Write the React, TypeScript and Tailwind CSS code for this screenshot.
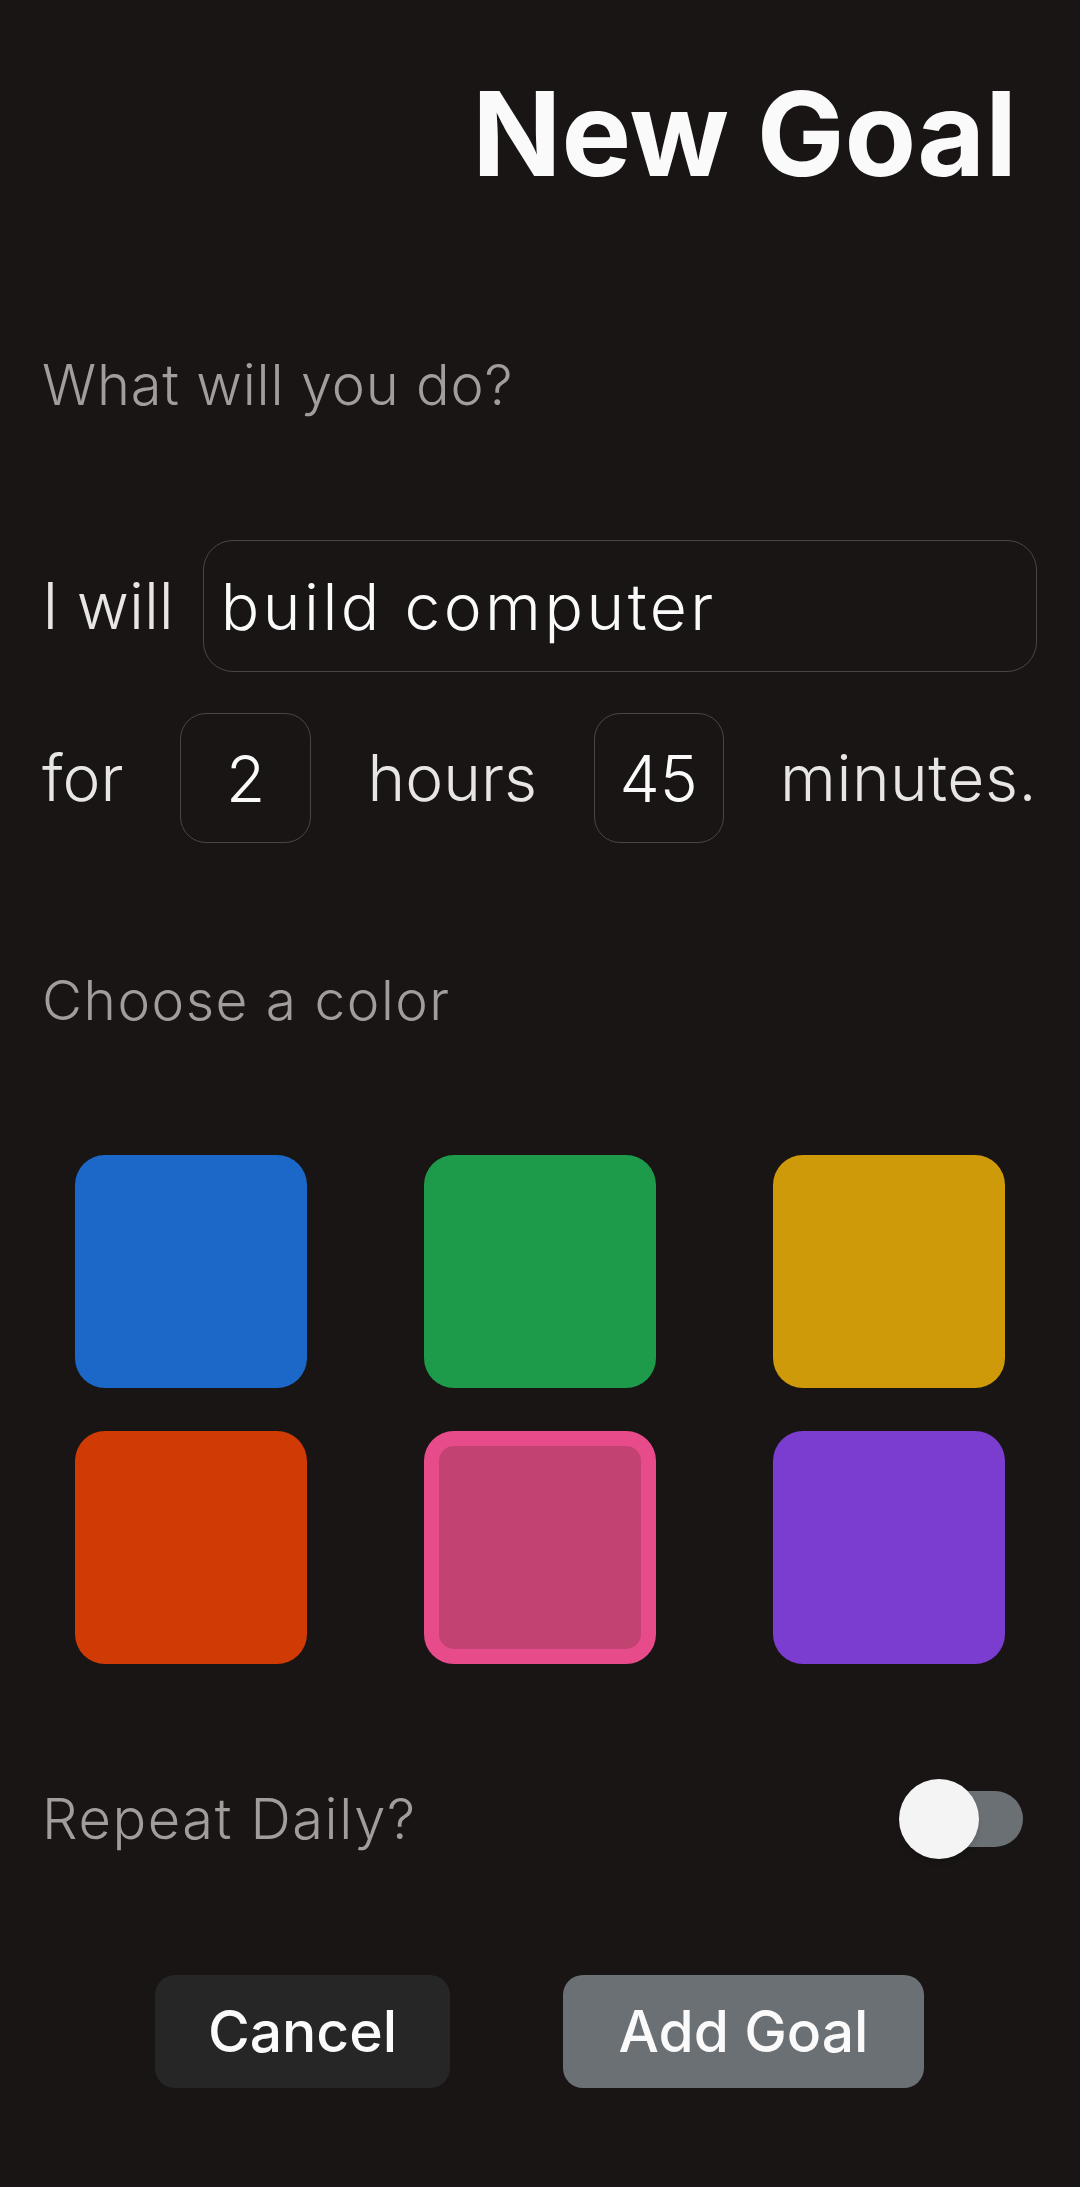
import { useState } from 'react'

const colors = [
  { id: 'blue', bg: 'bg-[#1b68c9]' },
  { id: 'green', bg: 'bg-[#1d9a4a]' },
  { id: 'yellow', bg: 'bg-[#cf9a0a]' },
  { id: 'orange', bg: 'bg-[#d03a04]' },
  { id: 'pink', bg: 'bg-[#c24272]' },
  { id: 'purple', bg: 'bg-[#7b3cd0]' },
]

const NewGoal = () => {
  const [what, setWhat] = useState('build computer')
  const [hours, setHours] = useState('2')
  const [minutes, setMinutes] = useState('45')
  const [picked, setPicked] = useState('pink')
  const [daily, setDaily] = useState(false)

  return (
    <div className="min-h-screen bg-[#181514] font-['Inter','Noto_Sans',sans-serif] text-[#e8e6e4] pl-[42px] pr-[43px] pt-[75px] pb-[99px]">
      <h1 className="text-right pr-[20px] text-[117px] leading-none font-bold tracking-[0px] text-[#fafafa]">New Goal</h1>

      <p className="mt-[165px] text-[56px] leading-none font-light tracking-[0.8px] text-[#a19d9b]">What will you do?</p>

      <div className="mt-[127px] flex items-center gap-[29px]">
        <span className="text-[64px] leading-none font-light whitespace-nowrap">I will</span>
        <input
          value={what}
          onChange={e => setWhat(e.target.value)}
          className="flex-1 min-w-0 h-[132px] rounded-[30px] border border-[#4a4645] bg-transparent px-[17px] text-[64px] font-light tracking-[3.5px] text-[#fafafa] outline-none"
        />
      </div>

      <div className="mt-[41px] flex items-center justify-between text-[64px] leading-none font-light">
        <span>for</span>
        <input
          value={hours}
          onChange={e => setHours(e.target.value)}
          className="w-[131px] h-[130px] rounded-[26px] border border-[#4a4645] bg-transparent text-center text-[64px] font-light text-[#fafafa] outline-none"
        />
        <span>hours</span>
        <input
          value={minutes}
          onChange={e => setMinutes(e.target.value)}
          className="w-[130px] h-[130px] rounded-[26px] border border-[#4a4645] bg-transparent text-center text-[64px] font-light text-[#fafafa] outline-none"
        />
        <span className="tracking-[0.5px]">minutes.</span>
      </div>

      <p className="mt-[130px] text-[55px] leading-none font-light tracking-[1.5px] text-[#a19d9b]">Choose a color</p>

      <div className="mt-[127px] grid grid-cols-[232px_232px_232px] justify-center gap-x-[117px] gap-y-[43px]">
        {colors.map(c => (
          <button
            key={c.id}
            onClick={() => setPicked(c.id)}
            className={
              picked === c.id
                ? `w-[232px] h-[233px] rounded-[30px] border-[15px] border-[#e84b8a] ${c.bg}`
                : `w-[232px] h-[233px] rounded-[30px] ${c.bg}`
            }
          />
        ))}
      </div>

      <div className="mt-[115px] flex items-center justify-between pr-[14px]">
        <span className="text-[56px] leading-none font-light tracking-[1.6px] text-[#a19d9b]">Repeat Daily?</span>
        <button onClick={() => setDaily(!daily)} className="relative w-[124px] h-[80px]">
          <span className={daily ? 'absolute left-[6px] right-0 top-[12px] h-[56px] rounded-full bg-[#c24272]' : 'absolute left-[6px] right-0 top-[12px] h-[56px] rounded-full bg-[#6b7075]'} />
          <span className={daily ? 'absolute right-0 top-0 w-[80px] h-[80px] rounded-full bg-[#f4f4f4] shadow-md' : 'absolute left-0 top-0 w-[80px] h-[80px] rounded-full bg-[#f4f4f4] shadow-md'} />
        </button>
      </div>

      <div className="mt-[116px] flex justify-center gap-[113px]">
        <button className="w-[295px] h-[113px] rounded-[20px] bg-[#262626] text-[57px] font-medium text-[#fafafa]">Cancel</button>
        <button className="w-[361px] h-[113px] rounded-[20px] bg-[#6b7075] text-[57px] font-medium text-[#fafafa]">Add Goal</button>
      </div>
    </div>
  )
}

export default function App() {
  return <NewGoal />
}
